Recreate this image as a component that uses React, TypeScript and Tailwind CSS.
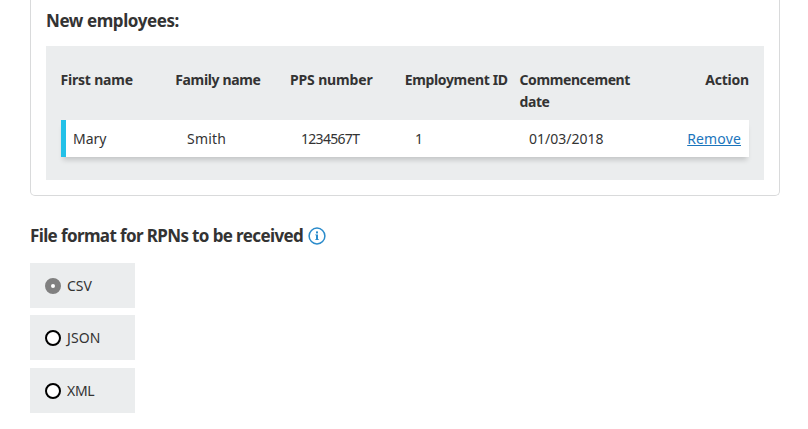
import React from "react";

const headers = [
  { text: "First name", cls: "tracking-[-0.2px]" },
  { text: "Family name", cls: "tracking-[-0.35px]" },
  { text: "PPS number", cls: "tracking-[-0.15px]" },
  { text: "Employment ID", cls: "tracking-[-0.35px] whitespace-nowrap" },
  { text: "Commencement date", cls: "tracking-[-0.4px]" },
  { text: "Action", cls: "tracking-[-0.2px] text-right" },
];

const cells = [
  { text: "Mary", cls: "w-[114px] tracking-[0px]" },
  { text: "Smith", cls: "w-[114px] tracking-[0.2px]" },
  { text: "1234567T", cls: "w-[114px] tracking-[-0.7px]" },
  { text: "1", cls: "w-[114px]" },
  { text: "01/03/2018", cls: "w-[114px] tracking-[0px]" },
];

const formats = [
  { text: "CSV", checked: true, gap: "mb-[7px]", cls: "tracking-[0px]" },
  { text: "JSON", checked: false, gap: "mb-[8px]", cls: "tracking-[0.1px]" },
  { text: "XML", checked: false, gap: "", cls: "tracking-[-0.3px]" },
];

function Radio({ checked }: { checked: boolean }) {
  return checked ? (
    <span className="block size-4 shrink-0 rounded-full border-[6px] border-[#808080] bg-white" />
  ) : (
    <span className="block size-4 shrink-0 rounded-full border-2 border-black bg-white" />
  );
}

function InfoIcon() {
  return (
    <svg className="size-[18px]" viewBox="0 0 18 18" fill="none">
      <circle cx="9" cy="9" r="7.9" stroke="#2a8bcb" strokeWidth="1.5" />
      <rect x="8" y="4.4" width="2" height="2" fill="#2a8bcb" />
      <path d="M7.2 7.4H10v4.8h.9v.9H7.2v-.9H8V8.3h-.8z" fill="#2a8bcb" />
    </svg>
  );
}

export default function App() {
  return (
    <main className="h-[429px] w-[808px] overflow-hidden bg-white pl-[30px] font-['Noto_Sans','Open_Sans',sans-serif] text-[#333]">
      <section className="h-[196px] w-[750px] rounded-b-[5px] border border-t-0 border-[#d9dadb] px-[15px]">
        <h2 className="flex h-[46px] items-start pt-[8px] text-[17px] leading-[26px] font-bold tracking-[-0.42px]">
          New employees:
        </h2>
        <div className="h-[134px] w-[718px] bg-[#ebedee] px-[15px] pt-[23px]">
          <div className="-ml-[0.5px] grid h-[51px] grid-cols-6 text-[14px] leading-[22px] font-bold">
            {headers.map((h) => (
              <div key={h.text} className={h.cls}>{h.text}</div>
            ))}
          </div>
          <div className="flex h-[37px] items-center border-l-[5px] border-[#23c1e8] bg-white pr-[8px] pl-[7px] text-[14px] shadow-[0_5px_5px_-2px_rgba(0,0,0,0.17)]">
            {cells.map((c) => (
              <div key={c.text} className={c.cls}>{c.text}</div>
            ))}
            <a href="#" className="ml-auto tracking-[0.15px] text-[#1b75bc] underline">Remove</a>
          </div>
        </div>
      </section>

      <section className="pt-[27px]">
        <h2 className="flex h-[26px] items-center gap-[5px] text-[17px] leading-[26px] font-bold">
          <span className="w-[273px] tracking-[-0.62px] whitespace-nowrap">File format for RPNs to be received</span>
          <InfoIcon />
        </h2>
        <div className="pt-[14px]">
          {formats.map((f) => (
            <div key={f.text} className={`flex h-[45px] w-[105px] items-center gap-[6px] bg-[#ebedee] pl-[15px] text-[14px] ${f.gap}`}>
              <Radio checked={f.checked} />
              <span className={f.cls}>{f.text}</span>
            </div>
          ))}
        </div>
      </section>
    </main>
  );
}
